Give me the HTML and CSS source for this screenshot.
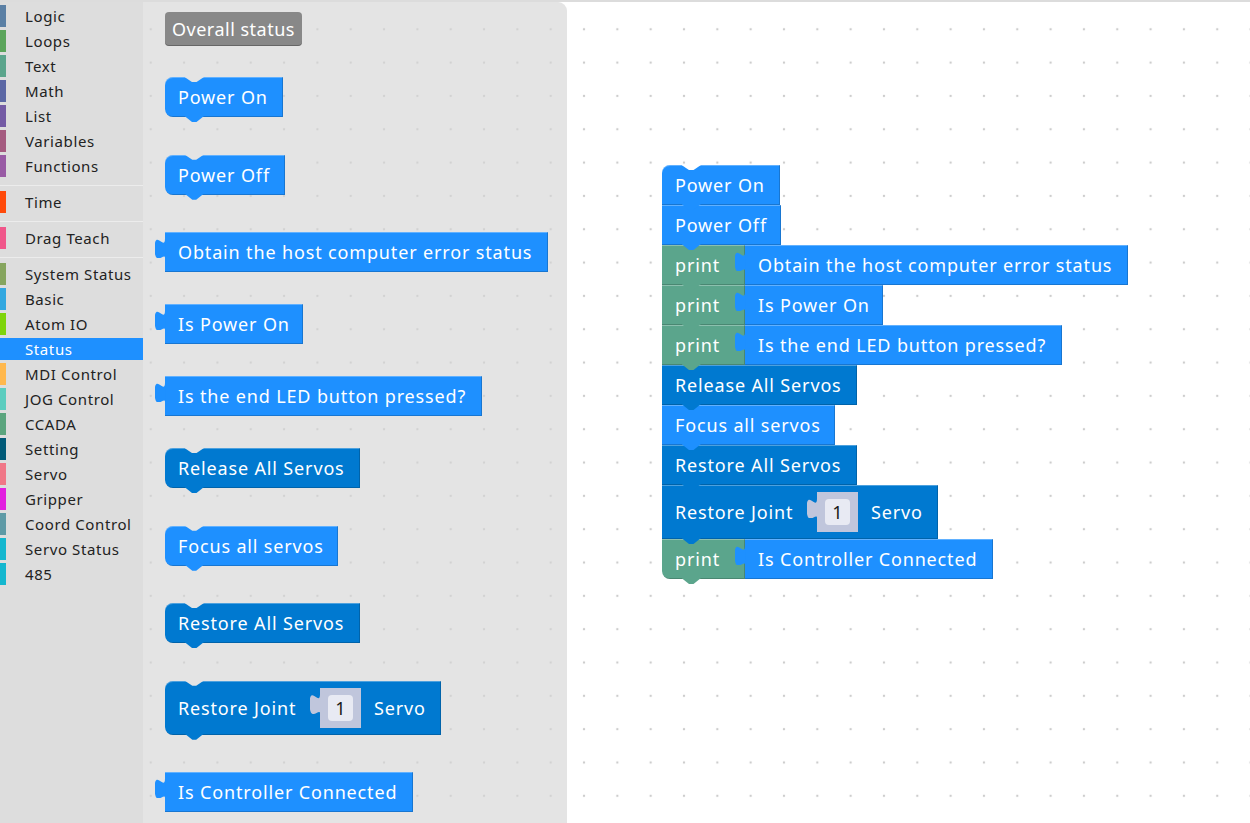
FILE: index.html
```html
<!DOCTYPE html>
<html>
<head>
<meta charset="utf-8">
<title>Blocks</title>
<link rel="stylesheet" href="styles.css">
</head>
<body>
<div class="app">
  <nav class="toolbox">
    <div class="cat"><span class="sw c-logic"></span>Logic</div>
    <div class="cat"><span class="sw c-loops"></span>Loops</div>
    <div class="cat"><span class="sw c-text"></span>Text</div>
    <div class="cat"><span class="sw c-math"></span>Math</div>
    <div class="cat"><span class="sw c-list"></span>List</div>
    <div class="cat"><span class="sw c-vars"></span>Variables</div>
    <div class="cat"><span class="sw c-func"></span>Functions</div>
    <div class="sep"></div>
    <div class="cat"><span class="sw c-time"></span>Time</div>
    <div class="sep"></div>
    <div class="cat"><span class="sw c-drag"></span>Drag Teach</div>
    <div class="sep"></div>
    <div class="cat"><span class="sw c-sys"></span>System Status</div>
    <div class="cat"><span class="sw c-basic"></span>Basic</div>
    <div class="cat"><span class="sw c-atom"></span>Atom IO</div>
    <div class="cat sel"><span class="sw"></span>Status</div>
    <div class="cat"><span class="sw c-mdi"></span>MDI Control</div>
    <div class="cat"><span class="sw c-jog"></span>JOG Control</div>
    <div class="cat"><span class="sw c-ccada"></span>CCADA</div>
    <div class="cat"><span class="sw c-setting"></span>Setting</div>
    <div class="cat"><span class="sw c-servo"></span>Servo</div>
    <div class="cat"><span class="sw c-grip"></span>Gripper</div>
    <div class="cat"><span class="sw c-coord"></span>Coord Control</div>
    <div class="cat"><span class="sw c-sstat"></span>Servo Status</div>
    <div class="cat"><span class="sw c-485"></span>485</div>
  </nav>

  <main class="workspace">
    <aside class="flyout">
      <div class="label">Overall status</div>
      <div class="blk stmt notch rt rb w-on">Power On</div>
      <div class="blk stmt notch rt rb w-off">Power Off</div>
      <div class="blk val w-obtain">Obtain the host computer error status</div>
      <div class="blk val w-ispower">Is Power On</div>
      <div class="blk val w-led">Is the end LED button pressed?</div>
      <div class="blk stmt notch rt rb dark w-release">Release All Servos</div>
      <div class="blk stmt notch rt rb w-focus">Focus all servos</div>
      <div class="blk stmt notch rt rb dark w-restore">Restore All Servos</div>
      <div class="blk stmt notch rt rb dark tall w-joint"><span class="joint-lbl">Restore Joint</span><span class="slot"><span class="num">1</span></span><span class="after">Servo</span></div>
      <div class="blk val w-conn">Is Controller Connected</div>
    </aside>

    <div class="stack">
      <div class="blk stmt notch rt w-on">Power On</div>
      <div class="blk stmt w-off-ws">Power Off</div>
      <div class="row"><div class="blk stmt print">print</div><div class="blk val w-obtain">Obtain the host computer error status</div></div>
      <div class="row"><div class="blk stmt print">print</div><div class="blk val w-ispower">Is Power On</div></div>
      <div class="row"><div class="blk stmt print">print</div><div class="blk val w-led">Is the end LED button pressed?</div></div>
      <div class="blk stmt dark w-release">Release All Servos</div>
      <div class="blk stmt w-focus">Focus all servos</div>
      <div class="blk stmt dark w-restore">Restore All Servos</div>
      <div class="blk stmt dark tall w-joint"><span class="joint-lbl">Restore Joint</span><span class="slot"><span class="num">1</span></span><span class="after">Servo</span></div>
      <div class="row"><div class="blk stmt print rb">print</div><div class="blk val w-conn">Is Controller Connected</div></div>
    </div>
  </main>
</div>
</body>
</html>
```

FILE: styles.css
```css
* { box-sizing: border-box; }
html, body { margin: 0; height: 100%; }
body {
  font-family: "Noto Sans", "Liberation Sans", sans-serif;
  background: #fff;
  overflow: hidden;
}

.app {
  display: flex;
  height: 823px;
  border-top: 2px solid #dcdcdc;
}

/* ---------- toolbox ---------- */
.toolbox {
  width: 143px;
  flex: none;
  background: #dddddd;
  padding-top: 3px;
}
.cat {
  display: flex;
  align-items: center;
  height: 22px;
  margin-bottom: 3px;
  font-size: 15px;
  letter-spacing: 0.6px;
  color: #222;
  white-space: nowrap;
}
.sw {
  width: 6px;
  height: 22px;
  margin-right: 19px;
  flex: none;
}
.sep {
  height: 1px;
  background: #ececec;
  margin: 8px 0 5px;
}
.cat.sel { background: #1e90ff; color: #fff; }

.c-logic { background: #5b80a5; }
.c-loops { background: #5ba55b; }
.c-text { background: #5ba58c; }
.c-math { background: #5b67a5; }
.c-list { background: #745ba5; }
.c-vars { background: #a55b80; }
.c-func { background: #995ba5; }
.c-time { background: #ff4a0a; }
.c-drag { background: #f0568a; }
.c-sys { background: #86a55e; }
.c-basic { background: #33a8e0; }
.c-atom { background: #7ed40a; }
.c-mdi { background: #ffb84d; }
.c-jog { background: #5ccdbf; }
.c-ccada { background: #5ba57e; }
.c-setting { background: #005a78; }
.c-servo { background: #f07787; }
.c-grip { background: #e21edf; }
.c-coord { background: #5e9aa6; }
.c-sstat { background: #14b7cf; }
.c-485 { background: #14b7cf; }

/* ---------- workspace ---------- */
.workspace {
  --canvas: #ffffff;
  flex: 1;
  position: relative;
  background-color: #fff;
  background-image: radial-gradient(circle at center, #cdcdcd 0, #cdcdcd 1px, transparent 1.6px);
  background-size: 33.333px 33.333px;
  background-position: -8.93px 10.6px;
}

.flyout {
  --canvas: #e4e4e4;
  position: absolute;
  left: 0;
  top: 0;
  width: 424px;
  height: 100%;
  z-index: 5;
  overflow: hidden;
  background-color: #e4e4e4;
  background-image: radial-gradient(circle at center, #d2d2d2 0, #d2d2d2 1px, transparent 1.6px);
  background-size: 33.333px 33.333px;
  background-position: -8.93px 10.6px;
  border-top-right-radius: 9px;
  padding: 10px 0 0 22px;
  display: flex;
  flex-direction: column;
  align-items: flex-start;
}
.flyout > * { flex-shrink: 0; }
.flyout .blk { margin-bottom: 32px; }
.flyout .stmt { margin-bottom: 37.5px; }

.label {
  height: 34px;
  margin-bottom: 31px;
  padding: 0 7px;
  display: flex;
  align-items: center;
  background: #888;
  border-radius: 4px;
  box-shadow: inset 0 -1px 0 rgba(0,0,0,0.25);
  color: #fff;
  font-size: 18px;
  letter-spacing: 0.5px;
}

/* ---------- blocks ---------- */
.blk {
  position: relative;
  flex-shrink: 0;
  display: flex;
  align-items: center;
  height: 40px;
  padding: 0 16px 0 13px;
  background: #1e90ff;
  color: #fff;
  font-size: 18px;
  letter-spacing: 0.85px;
  white-space: nowrap;
  box-shadow: inset -1px -1px 0 rgba(0,0,0,0.18), inset 0 1px 0 rgba(255,255,255,0.3);
}
.blk.dark { background: #0079d0; }
.blk.print { background: #5ba58c; width: 83px; }
.blk.tall { height: 54px; }
.rt { border-top-left-radius: 8px; }
.rb { border-bottom-left-radius: 8px; }

.w-on { width: 118px; }
.w-off { width: 120px; }
.w-off-ws { width: 119px; }
.w-obtain { width: 383px; }
.w-ispower { width: 138px; }
.w-led { width: 317px; }
.w-release { width: 195px; }
.w-focus { width: 173px; }
.w-restore { width: 195px; }
.w-joint { width: 276px; }
.w-conn { width: 248px; }

/* next-connection tab below a statement block */
.stmt::after {
  content: "";
  position: absolute;
  left: 19.5px;
  top: calc(100% - 1px);
  width: 19.5px;
  height: 6.2px;
  background: inherit;
  clip-path: polygon(0 0, 40% 100%, 60% 100%, 100% 0);
  z-index: 2;
}
/* previous-connection notch on top of a free statement block */
.notch::before {
  content: "";
  position: absolute;
  left: 19.5px;
  top: 0;
  width: 19.5px;
  height: 5.2px;
  background: var(--canvas);
  clip-path: polygon(0 0, 40% 100%, 60% 100%, 100% 0);
}
/* output puzzle tab on the left of a value block */
.val::before,
.slot::before {
  content: "";
  position: absolute;
  left: -10.4px;
  top: 6.5px;
  width: 11px;
  height: 19.5px;
  background: inherit;
  clip-path: path("M 11 0 L 10.4 0 C 10.4 13 0 -10.4 0 9.75 S 10.4 13 10.4 19.5 L 11 19.5 Z");
}

.joint-lbl { width: 120px; flex: none; }
.slot {
  position: relative;
  flex: none;
  width: 41px;
  height: 40px;
  margin-left: 22px;
  background: #c0c6dc;
  display: flex;
  align-items: center;
  justify-content: center;
}
.num {
  width: 25px;
  height: 26px;
  border-radius: 4px;
  background: #e8eaf3;
  color: #1a1a1a;
  font-size: 18px;
  letter-spacing: 0;
  display: flex;
  align-items: center;
  justify-content: center;
}
.after { margin-left: 13px; }

.stack {
  position: absolute;
  left: 519px;
  top: 163px;
  display: flex;
  flex-direction: column;
  align-items: flex-start;
}
.row { display: flex; }
```
